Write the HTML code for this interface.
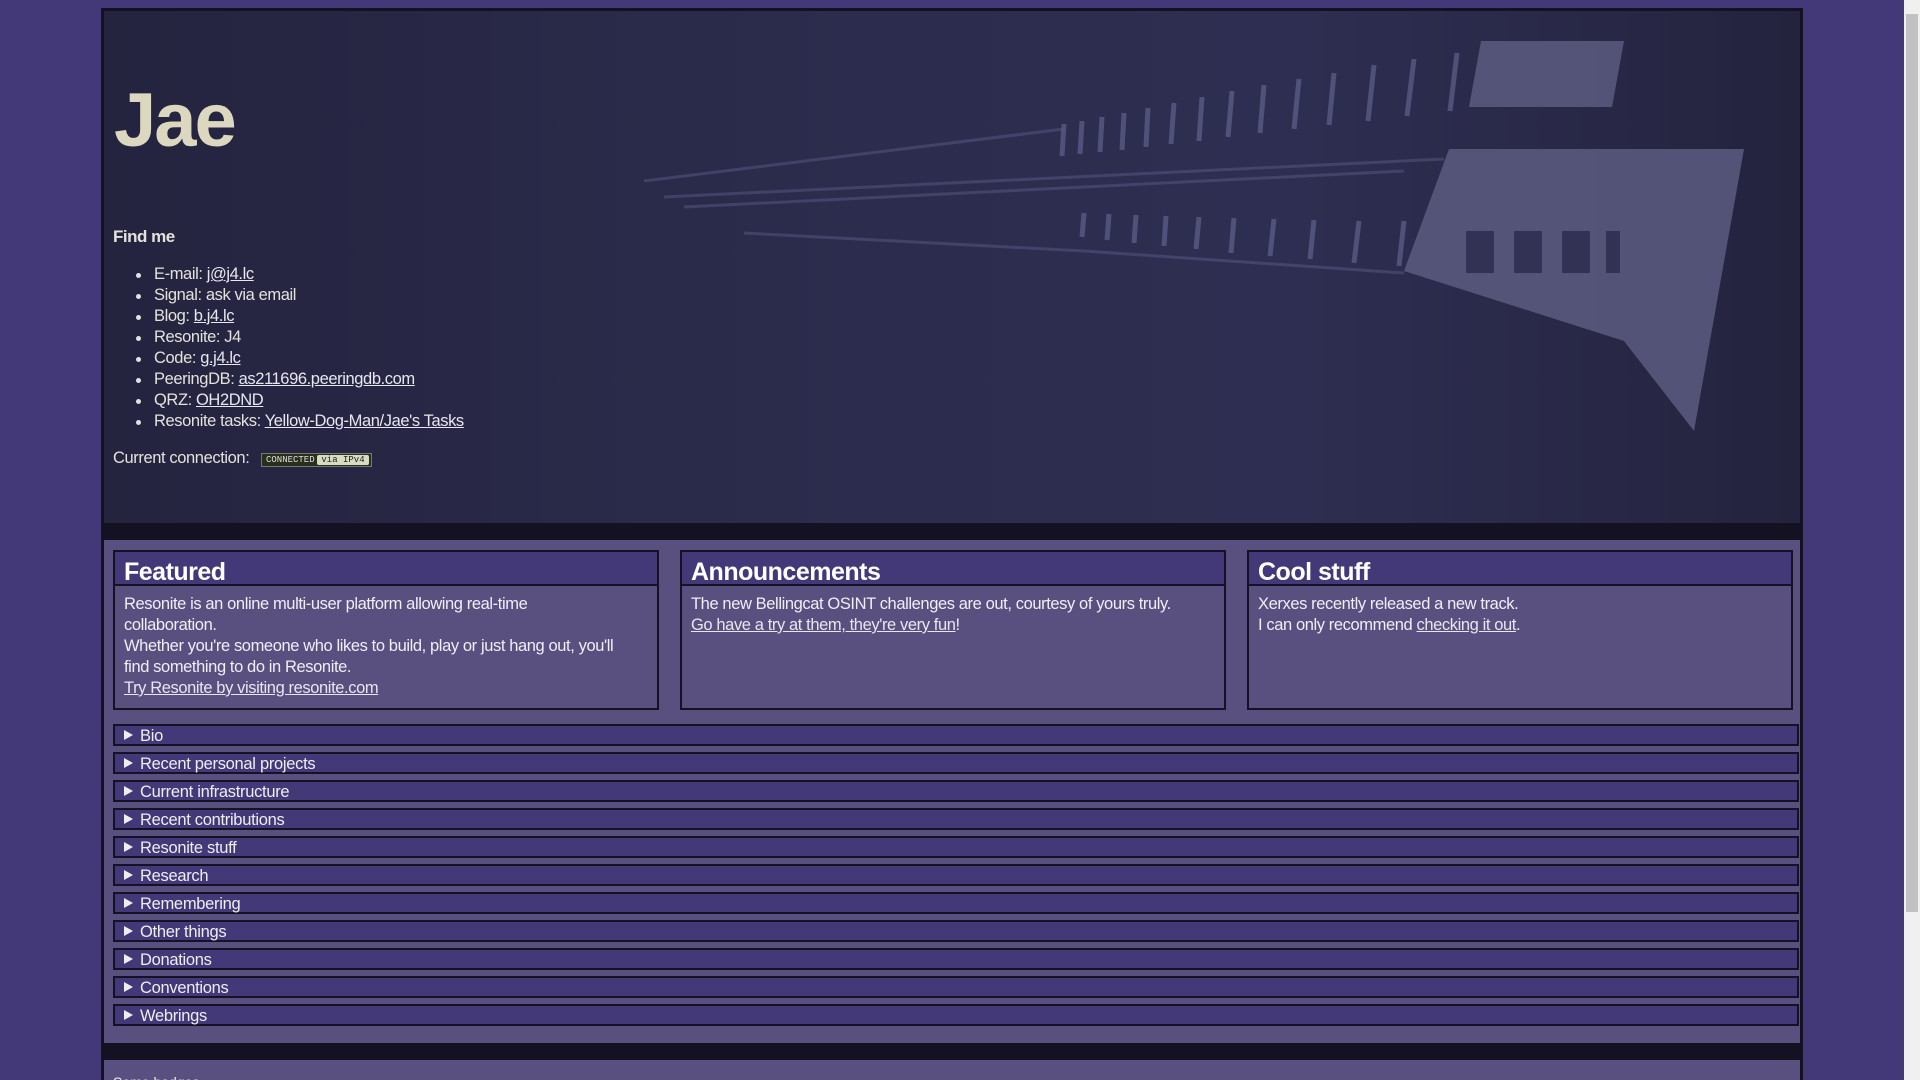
<!DOCTYPE html>
<html><head><meta charset="utf-8"><style>
*{box-sizing:border-box;margin:0;padding:0}
html,body{width:1920px;height:1080px;overflow:hidden}
body{background:#433878;font-family:"Liberation Sans",sans-serif;color:#e8e6ee;position:relative}
.sb{position:absolute;left:1904px;top:0;width:16px;height:1080px;background:#f0f0f0}
.sb .th{position:absolute;left:2px;top:14px;width:12px;height:898px;background:#c1c1c1}
.wrap{position:absolute;left:101px;top:8px;width:1702px;height:1080px;border:3px solid #141222;border-bottom:none;background:#5a5080}
.hdr{position:absolute;left:0;top:0;width:1696px;height:512px;background:linear-gradient(90deg,#24243f 0%,#2c2c4e 45%,#2e2e52 70%,#24233e 100%);overflow:hidden}
.dark1{position:absolute;left:0;top:512px;width:1696px;height:17px;background:#131122}
.jae{position:absolute;left:10px;top:66px;font-weight:bold;font-size:76px;color:#dcd8c0;letter-spacing:-2px}
.find{position:absolute;left:9px;top:216px;font-size:17px;font-weight:bold;color:#e4e2dc;letter-spacing:-0.5px}
ul{position:absolute;left:9px;top:253px;list-style:none;font-size:16.5px;line-height:21px;color:#e4e2dc;letter-spacing:-0.4px}
li{padding-left:41px;position:relative}
li:before{content:"";position:absolute;left:23px;top:9px;width:5px;height:5px;border-radius:50%;background:#e4e2dc}
a{color:#e8e6ee;text-decoration:underline}
.conn{position:absolute;left:9px;top:438px;font-size:16.5px;color:#e4e2dc;letter-spacing:-0.4px}
.badge{position:absolute;left:157px;top:442px;width:111px;height:14px;background:#2a3018;border:1px solid #777;font-family:"Liberation Mono",monospace;font-size:9px;color:#dde;line-height:12px}
.badge span{position:absolute;left:4px}
.badge b{position:absolute;right:2px;top:1px;width:52px;height:10px;background:#d8dcc0;color:#222;font-weight:normal;text-align:center;line-height:10px;border-radius:2px}
.card{position:absolute;top:539px;width:546px;height:160px;border:2px solid #151226;background:#5a5080}
.card h2{height:34px;background:#433878;border-bottom:2px solid #151226;font-size:25px;font-weight:bold;color:#fff;padding:5px 0 0 9px;line-height:30px;letter-spacing:-0.5px}
.card p{padding:8px 37px 8px 9px;font-size:16.5px;line-height:21px;color:#f0eef6;letter-spacing:-0.4px}
.det{position:absolute;left:9px;width:1686px;height:22px;border:2px solid #151226;background:#433878;font-size:16.5px;line-height:18px;color:#eee;letter-spacing:-0.3px}
.det:before{content:"";position:absolute;left:9px;top:4px;border-left:9px solid #eee;border-top:5px solid transparent;border-bottom:5px solid transparent}
.det span{position:absolute;left:25px;top:1px}
.dark2{position:absolute;left:0;top:1032px;width:1696px;height:17px;background:#131122}
.badges{position:absolute;left:9px;top:1063px;font-size:14px;color:#eee}
</style></head><body>
<div class="wrap">
 <div class="hdr">
  <svg width="1696" height="512" style="position:absolute;left:0;top:0">
   <g fill="#5a5c80" opacity="0.85">
    <polygon points="1377,30 1520,30 1508,96 1365,96"/>
    <polygon points="1345,138 1640,138 1590,420 1520,330 1300,260"/>
   </g>
   <g fill="#2a2b4c" opacity="0.8"><rect x="1362" y="220" width="28" height="42"/><rect x="1410" y="220" width="28" height="42"/><rect x="1458" y="220" width="28" height="42"/><rect x="1502" y="220" width="14" height="42"/></g>
   <g stroke="#686a94" stroke-width="5" opacity="0.6">
    <line x1="1353" y1="42" x2="1346" y2="100"/><line x1="1310" y1="48" x2="1303" y2="105"/><line x1="1270" y1="54" x2="1264" y2="110"/><line x1="1230" y1="62" x2="1225" y2="114"/><line x1="1195" y1="68" x2="1190" y2="118"/><line x1="1160" y1="74" x2="1156" y2="122"/><line x1="1128" y1="80" x2="1124" y2="126"/><line x1="1098" y1="86" x2="1095" y2="130"/><line x1="1070" y1="92" x2="1067" y2="133"/><line x1="1044" y1="97" x2="1042" y2="136"/><line x1="1020" y1="102" x2="1018" y2="139"/><line x1="998" y1="106" x2="996" y2="141"/><line x1="978" y1="110" x2="976" y2="143"/><line x1="960" y1="113" x2="958" y2="145"/>
    <line x1="1300" y1="210" x2="1295" y2="255"/><line x1="1255" y1="210" x2="1250" y2="252"/><line x1="1210" y1="209" x2="1206" y2="248"/><line x1="1170" y1="208" x2="1166" y2="245"/><line x1="1130" y1="207" x2="1127" y2="242"/><line x1="1095" y1="206" x2="1092" y2="238"/><line x1="1062" y1="205" x2="1060" y2="235"/><line x1="1032" y1="204" x2="1030" y2="232"/><line x1="1005" y1="203" x2="1003" y2="229"/><line x1="980" y1="202" x2="978" y2="226"/>
   </g>
   <path d="M540 170 L960 118 M560 186 L1340 148 M580 196 L1300 160 M640 222 L980 240 L1300 262" stroke="#585a84" stroke-width="3" opacity="0.5" fill="none"/>
  </svg>
  <div class="jae">Jae</div>
  <div class="find">Find me</div>
  <ul>
   <li>E-mail: <a>j@j4.lc</a></li>
   <li>Signal: ask via email</li>
   <li>Blog: <a>b.j4.lc</a></li>
   <li>Resonite: J4</li>
   <li>Code: <a>g.j4.lc</a></li>
   <li>PeeringDB: <a>as211696.peeringdb.com</a></li>
   <li>QRZ: <a>OH2DND</a></li>
   <li>Resonite tasks: <a>Yellow-Dog-Man/Jae's Tasks</a></li>
  </ul>
  <div class="conn">Current connection:</div>
  <div class="badge"><span>CONNECTED</span><b>via IPv4</b></div>
 </div>
 <div class="dark1"></div>
 <div class="card" style="left:9px"><h2>Featured</h2><p>Resonite is an online multi-user platform allowing real-time collaboration.<br>Whether you're someone who likes to build, play or just hang out, you'll find something to do in Resonite.<br><a>Try Resonite by visiting resonite.com</a></p></div>
 <div class="card" style="left:576px"><h2>Announcements</h2><p>The new Bellingcat OSINT challenges are out, courtesy of yours truly.<br><a>Go have a try at them, they're very fun</a>!</p></div>
 <div class="card" style="left:1143px"><h2>Cool stuff</h2><p>Xerxes recently released a new track.<br>I can only recommend <a>checking it out</a>.</p></div>
 <div class="det" style="top:713px"><span>Bio</span></div>
 <div class="det" style="top:741px"><span>Recent personal projects</span></div>
 <div class="det" style="top:769px"><span>Current infrastructure</span></div>
 <div class="det" style="top:797px"><span>Recent contributions</span></div>
 <div class="det" style="top:825px"><span>Resonite stuff</span></div>
 <div class="det" style="top:853px"><span>Research</span></div>
 <div class="det" style="top:881px"><span>Remembering</span></div>
 <div class="det" style="top:909px"><span>Other things</span></div>
 <div class="det" style="top:937px"><span>Donations</span></div>
 <div class="det" style="top:965px"><span>Conventions</span></div>
 <div class="det" style="top:993px"><span>Webrings</span></div>
 <div class="dark2"></div>
 <div class="badges">Some badges</div>
</div>
<div class="sb"><div class="th"></div></div>
</body></html>
